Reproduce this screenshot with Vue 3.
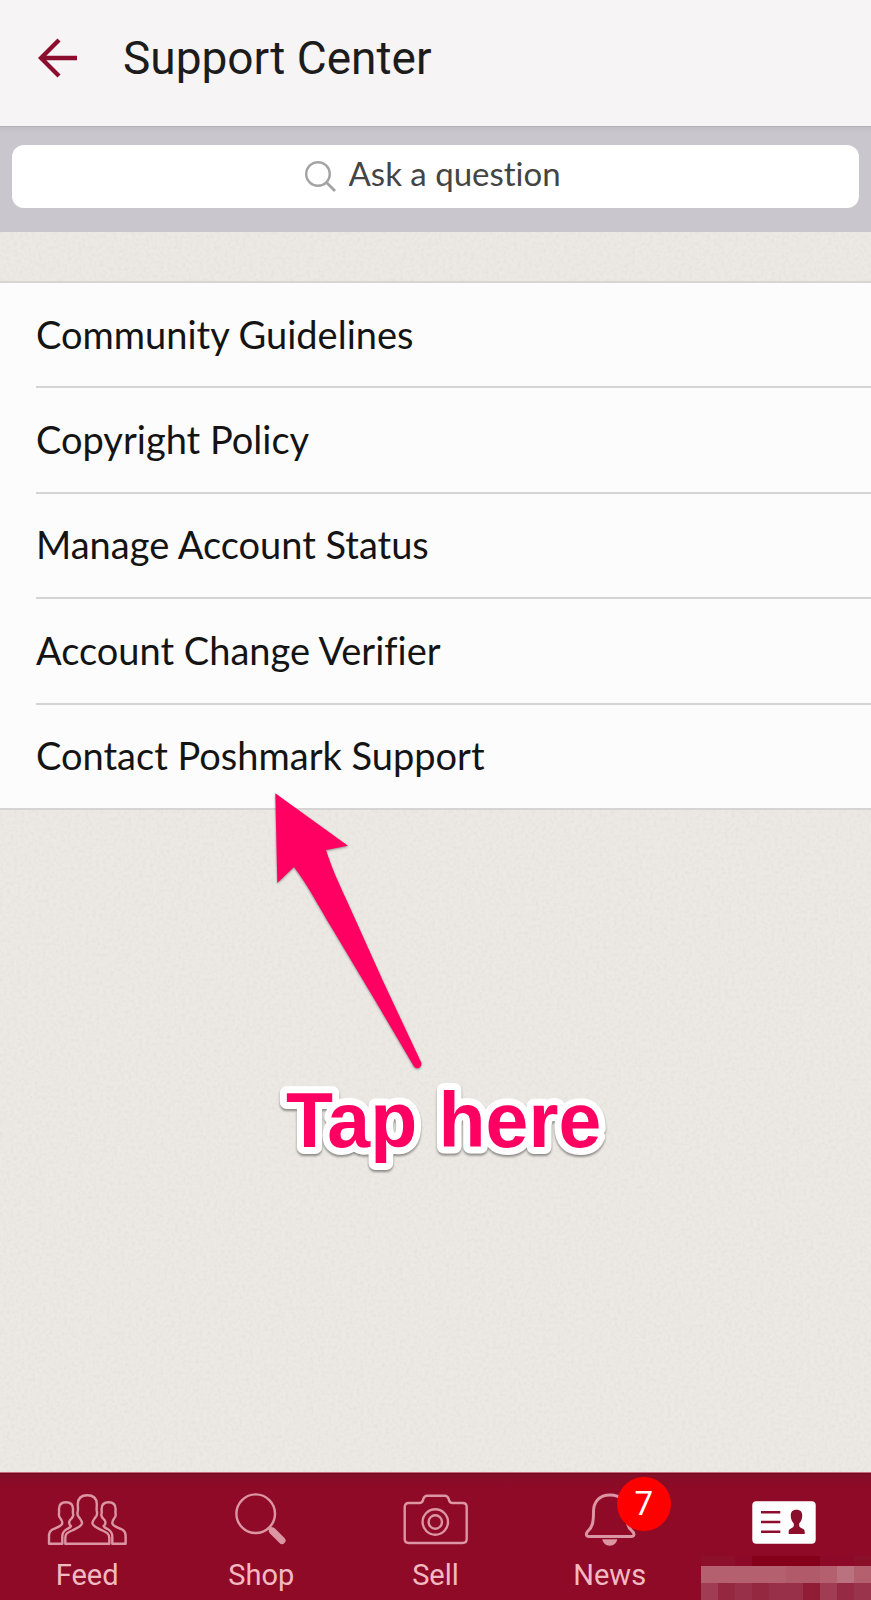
<script setup>
import { ref } from "vue";

const question = ref("");

const links = [
  "Community Guidelines",
  "Copyright Policy",
  "Manage Account Status",
  "Account Change Verifier",
  "Contact Poshmark Support",
];

// 프로필 이름을 가리는 모자이크 색상
const mosaic = [
  "#8c1029", "#8c1029", "#8c0a27", "#85001b", "#85001b", "#85001b", "#85001b", "#8c0a27", "#8c0a27", "#8a1029",
  "#b4606f", "#b4606f", "#b4606f", "#b4606f", "#b4606f", "#b05a6a", "#b05a6a", "#b4606f", "#bb7280", "#b4606f",
  "#a03c53", "#952840", "#98304a", "#942840", "#98304a", "#98304a", "#901c36", "#a03c53", "#962a44", "#9a344c",
];
</script>

<template>
  <div class="app">
    <header class="header">
      <button class="header__back" type="button" aria-label="Back">
        <svg width="40" height="40" viewBox="0 0 40 40">
          <path d="M39 20H4M21 2L3 20L21 38" fill="none" stroke="#8b0f2d" stroke-width="4.400" />
        </svg>
      </button>
      <h1 class="header__title">Support Center</h1>
    </header>

    <div class="search">
      <label class="search__box">
        <svg class="search__icon" width="32" height="32" viewBox="0 0 32 32" aria-hidden="true">
          <circle cx="13" cy="13" r="11.800" fill="none" stroke="#a3a3a3" stroke-width="2.400" />
          <path d="M21.500 21.500L30 30" stroke="#a3a3a3" stroke-width="2.800" />
        </svg>
        <input v-model="question" class="search__input" type="text" placeholder="Ask a question" aria-label="Ask a question" />
      </label>
    </div>

    <main class="main">
      <svg class="paper" aria-hidden="true">
        <filter id="paper-grain" x="0" y="0" width="100%" height="100%">
          <feTurbulence type="fractalNoise" baseFrequency="0.28" numOctaves="3" seed="4" />
          <feColorMatrix values="0 0 0 0 0.45  0 0 0 0 0.42  0 0 0 0 0.38  0.25 0 0 0 -0.1" />
        </filter>
        <rect width="100%" height="100%" filter="url(#paper-grain)" />
      </svg>

      <ul class="list">
        <li v-for="link in links" :key="link" class="list__item">
          <a class="list__link" href="#">{{ link }}</a>
        </li>
      </ul>

      <div class="hint">
        <svg class="hint__arrow" width="160" height="285" viewBox="0 0 160 285" aria-hidden="true">
          <path
            d="M5.300 3.300L78 55.700L56 60C61 76 69 94 77 111L113 191L151 272C153 277 147 280.500 144 276.500L106 212L63 140C49 117 37 94 24 77L7.300 93Z"
            fill="#ff0062"
          />
        </svg>
        <svg class="hint__label" width="350" height="100">
          <text class="hint__text" x="16" y="72">Tap here</text>
        </svg>
      </div>
    </main>

    <nav class="tabs">
      <a class="tab" href="#">
        <svg class="tab__icon" width="80" height="56" viewBox="0 0 80 56">
          <g class="line">
            <path d="M40.300 4.300C34 4.300 31 7 30.800 13C30.800 16 31.200 18 30.800 20C30 23 31 25.500 32.200 26.500C34 29 35.500 30.500 35 32.500C34 36 29 37.500 25 39.500C20 41.500 18.300 43 18.300 47V52.700H62.300V47C62.300 43 60 41.500 55.500 39.500C51.500 37.500 46.500 36 45.500 32.500C45 30.500 46.500 29 48.300 26.500C49.500 25.500 50.500 23 49.800 20C49.400 18 49.800 16 49.800 13C49.600 7 46.600 4.300 40.300 4.300Z" />
            <path id="side-person" d="M19 11.300C14 11.300 12 14 12 18C12 20 12.300 21 12 22.500C11.500 25 12.500 26.500 13.500 27.500C15 29.500 16 31 15 33C13.500 36 9 36.500 5.500 38.500C2.500 40.200 2 42 2 45V52.700H15.300V45.500C15.300 41.500 16.500 40 20 38C22 37 23.500 36.500 24 35C22 34 22 31 22.500 30C23 28.500 25 27.500 25.500 26C26.500 24.500 26.500 23.500 26 22.500C25.700 21 26 20 26 18C26 14 24 11.300 19 11.300Z" />
            <use href="#side-person" transform="matrix(-1 0 0 1 80.600 0)" />
          </g>
        </svg>
        <span class="tab__label">Feed</span>
      </a>
      <a class="tab" href="#">
        <svg class="tab__icon" width="80" height="56" viewBox="0 0 80 56">
          <circle class="line" cx="34.700" cy="22.700" r="19.300" />
          <path d="M48.500 37L51 39.500" stroke="#dc95a3" stroke-width="4" />
          <path d="M51.500 40L61 49.500" stroke="#dc95a3" stroke-width="7" stroke-linecap="round" />
        </svg>
        <span class="tab__label">Shop</span>
      </a>
      <a class="tab" href="#">
        <svg class="tab__icon" width="80" height="56" viewBox="0 0 80 56">
          <g class="line">
            <path d="M13.700 12H24.500C28 12 27.500 10 28.500 7.500C29.300 5.500 30 4.700 32 4.700H50C52 4.700 52.700 5.500 53.500 7.500C54.500 10 54 12 57.500 12H67.700Q71.700 12 71.700 16V48Q71.700 52 67.700 52H13.700Q9.700 52 9.700 48V16Q9.700 12 13.700 12Z" />
            <circle cx="40.300" cy="31" r="12.700" />
            <circle cx="40.300" cy="31" r="6.700" />
          </g>
        </svg>
        <span class="tab__label">Sell</span>
      </a>
      <a class="tab" href="#">
        <span class="tab__figure">
          <svg class="tab__icon" width="80" height="56" viewBox="0 0 80 56">
            <path class="line line--bold" d="M40 4C29 4 23.500 11 23.500 21C23.500 31 22.500 36 18 40C15.500 42.500 16 45.500 19 45.500H61C64.500 45.500 65 42.500 62 40C57.500 36 56.500 31 56.500 21C56.500 11 51 4 40 4Z" />
            <path d="M32.300 48.300H47.300C46.500 52.500 43.500 54.700 39.800 54.700C36 54.700 33 52.500 32.300 48.300Z" fill="#dc95a3" />
          </svg>
          <span class="badge">7</span>
        </span>
        <span class="tab__label">News</span>
      </a>
      <a class="tab" href="#" aria-label="Profile">
        <svg class="tab__icon" width="80" height="56" viewBox="0 0 80 56">
          <rect x="8.300" y="10.300" width="63.400" height="42.400" rx="4" fill="#fff" />
          <path d="M17 21.200H36.300M17 31H36.300M17 40.700H36.300" stroke="#8b0f2d" stroke-width="2.400" />
          <path d="M52.500 18.700C48 18.700 46.500 21.500 46.800 25.500C47 29 48.500 31 49.800 32.500V35C49 37.500 44.700 37 44.700 40.500V43H60.700V40.500C60.700 37 56 37.500 55.200 35V32.500C56.500 31 58 29 58.200 25.500C58.500 21.500 57 18.700 52.500 18.700Z" fill="#8b0f2d" />
        </svg>
        <span class="mosaic" aria-hidden="true">
          <span v-for="(color, i) in mosaic" :key="i" :style="{ backgroundColor: color }"></span>
        </span>
      </a>
    </nav>
  </div>
</template>

<style>
body {
  margin: 0;
}
</style>

<style scoped>
.app {
  display: flex;
  flex-direction: column;
  min-height: 100vh;
  font-family: Roboto, "Liberation Sans", sans-serif;
  background-color: #ece9e4;
}

.header {
  display: flex;
  align-items: center;
  column-gap: 45px;
  height: 126px;
  padding: 0 38px 10px;
  box-sizing: border-box;
  background-color: #f7f4f6;
}

.header__back {
  display: flex;
  padding: 0;
  border: none;
  background: none;
  cursor: pointer;
}

.header__title {
  margin: 0;
  font-size: 46px;
  font-weight: 400;
  color: #1c1c1c;
}

.search {
  padding: 18px 12px 24px;
  border-top: 1px solid #b3b0b5;
  background: linear-gradient(#c1bec4, #c9c6cd 6px);
}

.search__box {
  display: flex;
  align-items: center;
  justify-content: center;
  column-gap: 12px;
  height: 63px;
  border-radius: 12px;
  background-color: #fff;
}

.search__input {
  width: 218px;
  padding: 0 0 8px;
  border: none;
  outline: none;
  background: none;
  font-family: Lato, sans-serif;
  font-size: 33px;
  font-variant-ligatures: none;
  color: #444;
}

.search__input::placeholder {
  color: #444;
  opacity: 1;
}

.main {
  position: relative;
  flex: 1;
  padding-top: 49px;
}

.paper {
  position: absolute;
  inset: 0;
  width: 100%;
  height: 100%;
}

.list {
  position: relative;
  display: grid;
  grid-auto-rows: 1fr;
  min-height: 527px;
  margin: 0;
  padding: 0;
  border-top: 2px solid #d8d4d2;
  list-style: none;
  background-color: #fcfcfc;
}

.list__item {
  display: flex;
}

.list__link {
  flex: 1;
  display: flex;
  align-items: center;
  margin-left: 36px;
  padding-bottom: 2px;
  border-bottom: 2px solid #d5d3d3;
  font-family: Lato, sans-serif;
  font-size: 38px;
  font-variant-ligatures: none;
  color: #141414;
  text-decoration: none;
}

.list__item:last-child .list__link {
  margin-left: 0;
  padding-left: 36px;
}

/* 목록 위에 겹쳐지는 안내 화살표 */
.hint {
  position: absolute;
  top: 558px;
  left: 31%;
  display: flex;
  flex-direction: column;
  pointer-events: none;
}

.hint__arrow {
  filter: drop-shadow(0 1px 1px rgba(0, 0, 0, 0.4));
}

.hint__label {
  overflow: visible;
  filter: drop-shadow(0 2px 1px rgba(0, 0, 0, 0.4));
}

.hint__text {
  font-family: "Liberation Sans", sans-serif;
  font-size: 77px;
  font-weight: 700;
  fill: #ff0062;
  stroke: #fff;
  stroke-width: 14px;
  stroke-linejoin: round;
  paint-order: stroke fill;
}

.tabs {
  position: relative;
  display: grid;
  grid-template-columns: repeat(5, 1fr);
  height: 128px;
  box-sizing: border-box;
  border-top: 1px solid #c46a7c;
  background: linear-gradient(#6e0a1e, #840f28 2px, #8e0a27 14px);
}

.tab {
  display: flex;
  flex-direction: column;
  align-items: center;
  padding-top: 18px;
  text-decoration: none;
}

.tab__figure {
  position: relative;
  display: flex;
}

.tab__icon {
  flex: none;
}

.tab__label {
  margin-top: 11px;
  font-size: 29px;
  line-height: 34px;
  color: #f3b9c2;
}

.line {
  fill: none;
  stroke: #dc95a3;
  stroke-width: 2.4;
  stroke-linejoin: round;
}

.line--bold {
  stroke-width: 3;
}

.badge {
  position: absolute;
  top: -14px;
  left: 47px;
  width: 54px;
  height: 54px;
  border-radius: 50%;
  background-color: #fe0000;
  font-size: 33px;
  line-height: 54px;
  text-align: center;
  color: #fff;
}

.mosaic {
  position: absolute;
  right: 0;
  bottom: 0;
  display: grid;
  grid-template-columns: repeat(10, 17px);
  grid-template-rows: 10px 17px 17px;
}
</style>
